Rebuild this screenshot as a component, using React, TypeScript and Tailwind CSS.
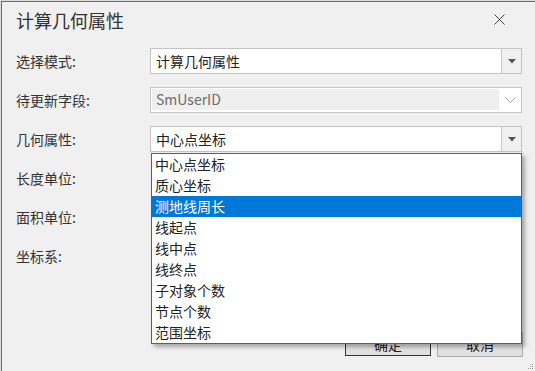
import React from "react";

const items = ["中心点坐标", "质心坐标", "测地线周长", "线起点", "线中点", "线终点", "子对象个数", "节点个数", "范围坐标"];

function Arrow() {
  return (
    <div className="w-[20px] h-full border-l border-[#c6c6c6] bg-[#f0f0f0] flex items-center justify-center">
      <svg width="8" height="5" viewBox="0 0 8 5">
        <path d="M0 0 L8 0 L4 4.5 Z" fill="#555" />
      </svg>
    </div>
  );
}

function Row({ label, children }: { label: string; children?: React.ReactNode }) {
  return (
    <div className="flex h-[26px] items-center">
      <div className="w-[134px] text-[14px] text-[#333]">{label}</div>
      <div className="flex-1 h-full relative">{children}</div>
    </div>
  );
}

export default function App() {
  const selected = 2;
  return (
    <div
      className="w-[535px] h-[371px] bg-[#dcdcdc] pl-px pt-px flex overflow-hidden"
      style={{ fontFamily: '"Noto Sans CJK SC", "Noto Sans", sans-serif' }}
    >
      <div className="flex-1 border-l border-t border-[#1883d7] bg-[#f0f0f0] flex flex-col pl-[14px] pr-[13px] relative">
        <div className="h-[46px] flex items-start justify-between">
          <div className="text-[18px] leading-none text-[#333] mt-[9px]">计算几何属性</div>
          <svg width="11" height="11" viewBox="0 0 11 11" className="mt-[12px] mr-[17px]">
            <path d="M0.5 0.5 L10.5 10.5 M10.5 0.5 L0.5 10.5" stroke="#444" strokeWidth="1" />
          </svg>
        </div>

        <div className="flex flex-col gap-[13px]">
          <Row label="选择模式:">
            <div className="h-full border border-[#c3c3c3] bg-white flex">
              <div className="flex-1 pl-[5px] text-[14px] text-[#222] leading-[24px]">计算几何属性</div>
              <Arrow />
            </div>
          </Row>
          <Row label="待更新字段:">
            <div className="h-full border border-[#c8c8c8] bg-white flex pt-px pl-px pb-[2px]">
              <div className="flex-1 bg-[#efefef] pl-[4px] text-[14px] text-[#6d6d6d] leading-[21px]">SmUserID</div>
              <div className="w-[22px] flex items-center justify-center">
                <svg width="11" height="6" viewBox="0 0 11 6">
                  <path d="M0.5 0.5 L5.5 5.5 L10.5 0.5" stroke="#a8a8a8" strokeWidth="1" fill="none" />
                </svg>
              </div>
            </div>
          </Row>
          <Row label="几何属性:">
            <div className="h-full border border-[#c3c3c3] bg-white flex">
              <div className="flex-1 pl-[5px] text-[14px] text-[#222] leading-[24px]">中心点坐标</div>
              <Arrow />
            </div>
            <div className="absolute top-[27px] left-[1px] right-0 z-10 bg-white border border-[#0078d7] shadow-[3px_3px_4px_rgba(0,0,0,0.3)]">
              {items.map((t, i) => (
                <div
                  key={t}
                  className={
                    i === selected
                      ? "h-[21px] pl-[3px] text-[14px] leading-[21px] bg-[#0078d7] text-white"
                      : "h-[21px] pl-[3px] text-[14px] leading-[21px] text-[#222]"
                  }
                >
                  {t}
                </div>
              ))}
            </div>
          </Row>
          <Row label="长度单位:" />
          <Row label="面积单位:" />
          <Row label="坐标系:" />
        </div>

        <div className="mt-[63px] flex justify-end gap-[6px]">
          <button className="w-[86px] h-[24px] border border-[#333] bg-[#e1e1e1] text-[14px] text-[#222]">确定</button>
          <button className="w-[86px] h-[25px] border border-[#adadad] bg-[#e1e1e1] text-[14px] text-[#222] mr-[-1px]">取消</button>
        </div>

        <svg width="7" height="7" viewBox="0 0 7 7" className="absolute right-[1px] bottom-[1px]">
          <rect x="5" y="1" width="1" height="1" fill="#999" />
          <rect x="3" y="3" width="1" height="1" fill="#999" />
          <rect x="5" y="3" width="1" height="1" fill="#999" />
          <rect x="1" y="5" width="1" height="1" fill="#999" />
          <rect x="3" y="5" width="1" height="1" fill="#999" />
          <rect x="5" y="5" width="1" height="1" fill="#999" />
        </svg>
      </div>
    </div>
  );
}
